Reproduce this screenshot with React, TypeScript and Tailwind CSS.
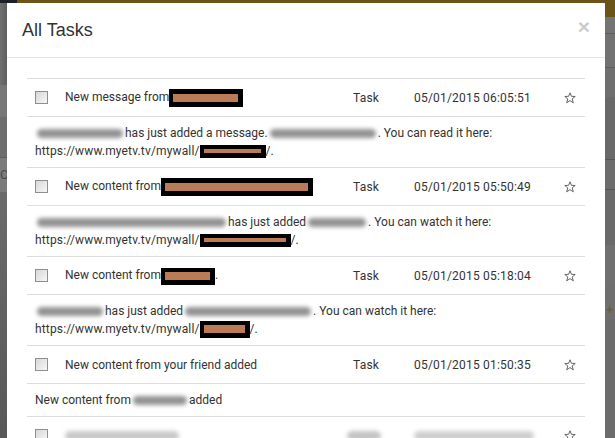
import React from "react";

type Piece =
  | { t: "text"; v: string }
  | { t: "link"; v: string }
  | { t: "blur"; w: number }
  | { t: "box"; w: number; h: number; inner: number };

interface TaskRow {
  title: Piece[];
  date: string;
  desc: Piece[][];
}

const rows: TaskRow[] = [
  {
    title: [
      { t: "text", v: "New message from" },
      { t: "box", w: 74, h: 18, inner: 8 },
    ],
    date: "05/01/2015 06:05:51",
    desc: [
      [
        { t: "blur", w: 90 },
        { t: "text", v: "has just added a message." },
        { t: "blur", w: 110 },
        { t: "text", v: ". You can read it here:" },
      ],
      [
        { t: "link", v: "https://www.myetv.tv/mywall/" },
        { t: "box", w: 66, h: 13, inner: 4 },
        { t: "text", v: "/." },
      ],
    ],
  },
  {
    title: [
      { t: "text", v: "New content from" },
      { t: "box", w: 152, h: 18, inner: 8 },
    ],
    date: "05/01/2015 05:50:49",
    desc: [
      [
        { t: "blur", w: 193 },
        { t: "text", v: "has just added" },
        { t: "blur", w: 62 },
        { t: "text", v: ". You can watch it here:" },
      ],
      [
        { t: "link", v: "https://www.myetv.tv/mywall/" },
        { t: "box", w: 91, h: 13, inner: 4 },
        { t: "text", v: "/." },
      ],
    ],
  },
  {
    title: [
      { t: "text", v: "New content from" },
      { t: "box", w: 54, h: 17, inner: 8 },
      { t: "text", v: "." },
    ],
    date: "05/01/2015 05:18:04",
    desc: [
      [
        { t: "blur", w: 70 },
        { t: "text", v: "has just added" },
        { t: "blur", w: 130 },
        { t: "text", v: ". You can watch it here:" },
      ],
      [
        { t: "link", v: "https://www.myetv.tv/mywall/" },
        { t: "box", w: 50, h: 17, inner: 8 },
        { t: "text", v: "/." },
      ],
    ],
  },
  {
    title: [{ t: "text", v: "New content from your friend added" }],
    date: "05/01/2015 01:50:35",
    desc: [
      [
        { t: "text", v: "New content from" },
        { t: "blur", w: 58 },
        { t: "text", v: "added" },
      ],
    ],
  },
];

function Bits({ parts }: { parts: Piece[] }) {
  return (
    <>
      {parts.map((p, i) => {
        if (p.t === "text") return <span key={i}>{p.v}</span>;
        if (p.t === "link")
          return (
            <span key={i} className="tracking-[0.15px]">
              {p.v}
            </span>
          );
        if (p.t === "blur")
          return (
            <span
              key={i}
              className="inline-block align-middle h-[9px] mx-[2px] rounded-full bg-[#929292] blur-[2px]"
              style={{ width: p.w - 4 }}
            />
          );
        return (
          <span
            key={i}
            className="inline-flex items-center align-middle bg-black pl-[4px] pr-[5px]"
            style={{ width: p.w, height: p.h }}
          >
            <span className="block w-full bg-[#ba7b57]" style={{ height: p.inner }} />
          </span>
        );
      })}
    </>
  );
}

function Checkbox() {
  return (
    <span className="block w-[13px] h-[13px] border border-[#8f8f8f] bg-gradient-to-br from-[#d8d8d8] to-[#f7f7f7]" />
  );
}

function StarIcon() {
  return (
    <svg width="12" height="12" viewBox="0 0 12 12" className="text-[#555]">
      <polygon
        points="6,0.8 7.4,4.3 11.2,4.5 8.2,6.9 9.3,10.8 6,8.6 2.7,10.8 3.8,6.9 0.8,4.5 4.6,4.3"
        fill="none"
        stroke="currentColor"
        strokeWidth="0.9"
        strokeLinejoin="round"
      />
    </svg>
  );
}

export default function App() {
  return (
    <div className="w-[615px] h-[438px] overflow-hidden flex flex-col bg-[#6b6b6b]">
      <div className="h-[3px] flex shrink-0">
        <div className="w-[17px] bg-[#1d2127]" />
        <div className="flex-1 bg-[#6b5418]" />
      </div>

      <div className="flex flex-1 min-h-0">
        {/* page left of the dialog */}
        <div className="w-[7px] flex flex-col shrink-0">
          <div className="h-[82px] bg-gradient-to-r from-[#707070] to-[#5e5e5e]" />
          <div className="h-[32px] bg-[#777777]" />
          <div className="h-[40px] bg-[#6d6d6d]" />
          <div className="h-[1px] bg-[#7a5d14]" />
          <div className="h-[34px] bg-[#7b7b7b] text-[13px] leading-[34px] text-[#4a4a4a] overflow-hidden font-['Roboto',sans-serif]">
            C
          </div>
          <div className="flex-1 bg-gradient-to-b from-[#6a6a6a] to-[#585858]" />
        </div>

        {/* dialog */}
        <div className="w-[598px] bg-white shrink-0 flex flex-col">
          <div className="h-[55px] shrink-0 px-[15px] flex items-center justify-between border-b border-[#e5e5e5]">
            <h4 className="text-[18px] text-[#333] font-['Liberation_Sans',Arial,sans-serif] mt-[1px]">
              All Tasks
            </h4>
            <span className="text-[21px] leading-none font-bold text-[#cccccc] font-['Liberation_Sans',Arial,sans-serif] -mt-[7px]">
              ×
            </span>
          </div>

          <div className="pt-[20px] px-[20px] text-[12px] text-[#333] font-['Roboto',sans-serif]">
            {rows.map((r, i) => (
              <div key={i}>
                <div className="h-[38px] border-t border-[#dddddd] flex items-center">
                  <div className="w-[38px] pl-[8px]">
                    <Checkbox />
                  </div>
                  <div className="w-[288px] whitespace-nowrap">
                    <Bits parts={r.title} />
                  </div>
                  <div className="w-[61px] tracking-[0.2px]">Task</div>
                  <div className="w-[150px] tracking-[0.2px]">{r.date}</div>
                  <div className="flex-1">
                    <StarIcon />
                  </div>
                </div>
                <div className="border-t border-[#dddddd] px-[8px] py-[7px] leading-[18px]">
                  {r.desc.map((line, j) => (
                    <div key={j} className="whitespace-nowrap flex items-center">
                      <Bits parts={line} />
                    </div>
                  ))}
                </div>
              </div>
            ))}
            <div className="h-[38px] border-t border-[#dddddd] flex items-center">
              <div className="w-[38px] pl-[8px]">
                <Checkbox />
              </div>
              <div className="w-[288px]">
                <span className="block w-[114px] h-[10px] rounded-full bg-[#c9c9c9] blur-[2px]" />
              </div>
              <div className="w-[61px]">
                <span className="block w-[34px] h-[10px] -ml-[6px] rounded-full bg-[#c4c4c4] blur-[2px]" />
              </div>
              <div className="w-[150px]">
                <span className="block w-[120px] h-[10px] rounded-full bg-[#cfcfcf] blur-[2px]" />
              </div>
              <div className="flex-1">
                <StarIcon />
              </div>
            </div>
          </div>
        </div>

        {/* page right of the dialog */}
        <div className="w-[10px] flex flex-col shrink-0">
          <div className="h-[14px] bg-[#6b5418]" />
          <div className="h-[16px] bg-[#747474]" />
          <div className="h-[1px] bg-[#5e5e5e]" />
          <div className="h-[33px] bg-[#727272]" />
          <div className="h-[1px] bg-[#5e5e5e]" />
          <div className="h-[29px] bg-[#6f6f6f]" />
          <div className="h-[62px] bg-[#696969]" />
          <div className="h-[1px] bg-[#555555]" />
          <div className="h-[29px] bg-[#6d6d6d]" />
          <div className="h-[1px] bg-[#555555]" />
          <div className="h-[55px] bg-[#6a6a6a]" />
          <div className="h-[40px] bg-[#707070]" />
          <div className="h-[16px] bg-[#6f6f6f]" />
          <div className="h-[18px] bg-[#6f6f6f] text-[13px] font-bold leading-[18px] text-[#7a5c12] pl-[1px] font-['Liberation_Sans',Arial,sans-serif]">
            +
          </div>
          <div className="flex-1 bg-[#6c6c6c]" />
        </div>
      </div>
    </div>
  );
}
